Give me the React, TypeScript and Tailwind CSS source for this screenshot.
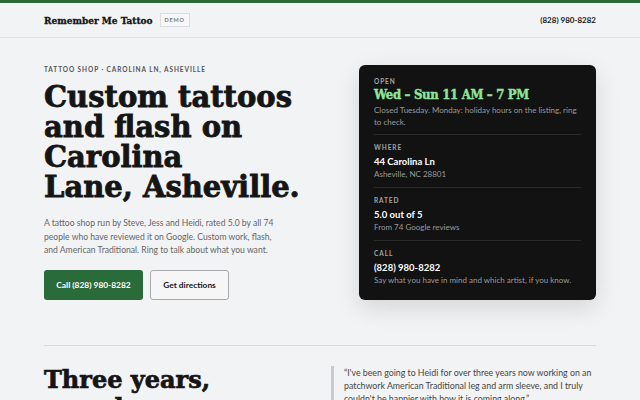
import React from 'react';

const slab = { fontFamily: '"DejaVu Serif", serif' };
const slabNarrow = { fontFamily: '"DejaVu Serif Condensed", "DejaVu Serif", serif' };

const facts = [
  { label: 'Where', value: '44 Carolina Ln', note: 'Asheville, NC 28801' },
  { label: 'Rated', value: '5.0 out of 5', note: 'From 74 Google reviews' },
  { label: 'Call', value: '(828) 980-8282', note: 'Say what you have in mind and which artist, if you know.' },
];

export default function App() {
  return (
    <div className="min-h-screen bg-[#f2f3f5] text-[#151515]" style={{ fontFamily: 'Lato, "Noto Sans", sans-serif' }}>
      <div className="h-[3px] bg-[#2b6a36]" />

      {/* ── Header ───────────────────────────── */}
      <header className="h-[35px] border-b border-[#e0e2e5] px-[44px] flex items-center justify-between">
        <div className="flex items-center gap-[7px]">
          <span className="text-[10px] font-bold [-webkit-text-stroke:0.3px_#151515]" style={slabNarrow}>Remember Me Tattoo</span>
          <span className="border border-[#dcdde0] bg-[#f7f7f8] px-[4px] py-[2px] text-[5.5px] leading-[8px] font-bold tracking-[0.15em] text-[#777]">DEMO</span>
        </div>
        <span className="text-[8px] font-bold">(828) 980-8282</span>
      </header>

      {/* ── Hero ─────────────────────────────── */}
      <section className="px-[44px] pt-[27px] pb-[45px] grid grid-cols-[1fr_237px] gap-[29px] items-start">
        <div>
          <p className="text-[6.5px] leading-[10px] font-bold uppercase tracking-[0.14em] text-[#555]">
            Tattoo shop · Carolina Ln, Asheville
          </p>
          <h1 className="mt-[7px] text-[29px] leading-[30px] font-bold [-webkit-text-stroke:0.8px_#151515]" style={slab}>
            Custom tattoos<br />and flash on<br />Carolina<br />Lane, Asheville.
          </h1>
          <p className="mt-[15px] max-w-[236px] text-[8.6px] leading-[13.7px] text-[#666]">
            A tattoo shop run by Steve, Jess and Heidi, rated 5.0 by all 74 people who have reviewed it on Google. Custom work, flash, and American Traditional. Ring to talk about what you want.
          </p>
          <div className="mt-[12px] flex gap-[7px]">
            <button className="h-[30px] w-[99px] rounded-[3px] bg-[#2a6b3a] text-[8.4px] font-bold text-white">
              Call (828) 980-8282
            </button>
            <button className="h-[30px] w-[79px] rounded-[3px] border border-[#a8a9ac] bg-[#f6f6f7] text-[8.4px] font-bold">
              Get directions
            </button>
          </div>
        </div>

        <aside className="rounded-[6px] bg-[#121212] px-[15px] pt-[4px] pb-[7px] shadow-[0_8px_24px_rgba(0,0,0,0.12)]">
          <div className="pt-[8px] pb-[6px]">
            <p className="text-[6.5px] leading-[10px] font-bold uppercase tracking-[0.14em] text-[#a5a5a5]">Open</p>
            <p className="text-[13px] leading-[15px] font-bold tracking-[-0.3px] text-[#8ee59b] [-webkit-text-stroke:0.4px_#8ee59b]" style={slabNarrow}>Wed – Sun 11 AM – 7 PM</p>
            <p className="mt-[2px] text-[8px] leading-[12px] text-[#9a9a9a]">
              Closed Tuesday. Monday: holiday hours on the listing, ring to check.
            </p>
          </div>
          {facts.map((f) => (
            <div key={f.label} className="border-t border-[#2a2a2a] pt-[8px] pb-[7px]">
              <p className="text-[6.5px] leading-[10px] font-bold uppercase tracking-[0.14em] text-[#a5a5a5]">{f.label}</p>
              <p className="mt-[2px] text-[9.5px] leading-[13px] font-bold text-white">{f.value}</p>
              <p className="text-[8px] leading-[12px] text-[#9a9a9a]">{f.note}</p>
            </div>
          ))}
        </aside>
      </section>

      {/* ── Review ───────────────────────────── */}
      <section className="mx-[44px] border-t border-[#d9dbde] pt-[20px] grid grid-cols-2 gap-[22px]">
        <h2 className="max-w-[200px] text-[24px] leading-[28px] font-bold [-webkit-text-stroke:0.7px_#151515]" style={slab}>
          Three years, one sleeve.
        </h2>
        <blockquote className="border-l-[3px] border-[#c9cacd] pl-[10px] text-[8.8px] leading-[13px] text-[#444]">
          “I've been going to Heidi for over three years now working on an patchwork American Traditional leg and arm sleeve, and I truly couldn't be happier with how it is coming along.”
        </blockquote>
      </section>
    </div>
  );
}
